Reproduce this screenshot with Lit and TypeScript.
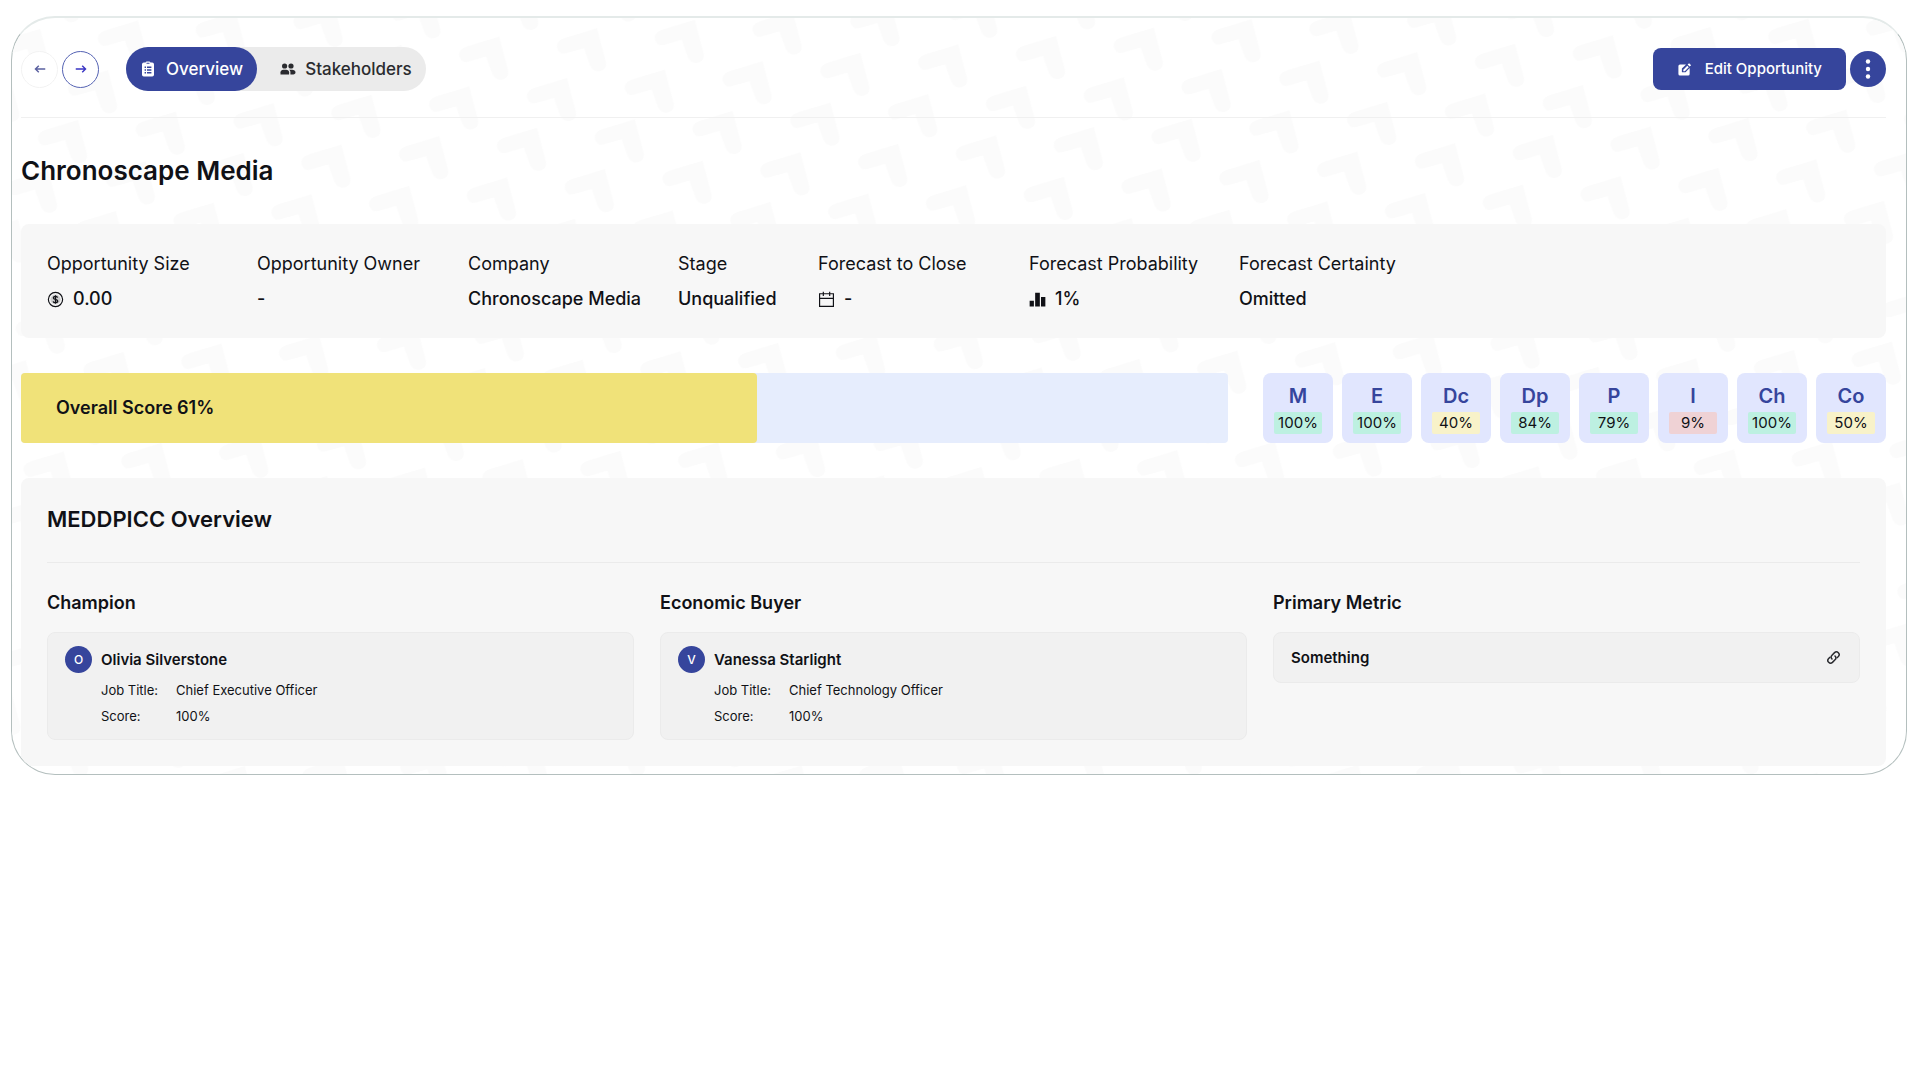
import { LitElement, html, css, svg } from "lit";
import { customElement, property } from "lit/decorators.js";

interface Fact {
  label: string;
  value: string;
  icon?: string;
}

interface Letter {
  code: string;
  score: number;
}

interface Person {
  role: string;
  name: string;
  title: string;
  score: number;
}

const FACTS: Fact[] = [
  { label: "Opportunity Size", value: "0.00", icon: "coin" },
  { label: "Opportunity Owner", value: "-" },
  { label: "Company", value: "Chronoscape Media" },
  { label: "Stage", value: "Unqualified" },
  { label: "Forecast to Close", value: "-", icon: "calendar" },
  { label: "Forecast Probability", value: "1%", icon: "bars" },
  { label: "Forecast Certainty", value: "Omitted" },
];

const LETTERS: Letter[] = [
  { code: "M", score: 100 },
  { code: "E", score: 100 },
  { code: "Dc", score: 40 },
  { code: "Dp", score: 84 },
  { code: "P", score: 79 },
  { code: "I", score: 9 },
  { code: "Ch", score: 100 },
  { code: "Co", score: 50 },
];

const PEOPLE: Person[] = [
  { role: "Champion", name: "Olivia Silverstone", title: "Chief Executive Officer", score: 100 },
  { role: "Economic Buyer", name: "Vanessa Starlight", title: "Chief Technology Officer", score: 100 },
];

const ICONS: Record<string, unknown> = {
  left: svg`<path d="M14 8H3M6.6 4.2 2.8 8l3.8 3.8" fill="none" stroke="currentColor" stroke-width="1.6"/>`,
  right: svg`<path d="M2 8h11M9.4 4.2 13.2 8l-3.8 3.8" fill="none" stroke="currentColor" stroke-width="1.6"/>`,
  clipboard: svg`<path fill="currentColor" fill-rule="evenodd" d="M5.600 1.600A1.400 1.400 0 0 1 6.900.4h2.200a1.400 1.400 0 0 1 1.300 1.200h1.800A1.800 1.800 0 0 1 14 3.400v10.400a1.800 1.800 0 0 1-1.800 1.800H3.800A1.800 1.800 0 0 1 2 13.800V3.400a1.800 1.800 0 0 1 1.800-1.800zM6.500 1.700v1.100h3V1.700zM4.600 5.500v1.400h1.400V5.500zm2.400 0v1.400h4.400V5.500zM4.600 8.300v1.400h1.400V8.300zm2.400 0v1.400h4.400V8.300zM4.600 11.100v1.400h1.400v-1.400zm2.400 0v1.400h4.400v-1.400z"/>`,
  people: svg`<g fill="currentColor"><circle cx="4.600" cy="5" r="2.600"/><circle cx="11" cy="5" r="2.600"/><path d="M.5 13.500v-2.200C.5 9.700 1.800 8.800 3.400 8.800h2.800c1.600 0 2.900.9 2.900 2.500v2.200z"/><path d="M9.200 8.800h2.900c1.900 0 3.400.9 3.400 2.500 0 1.300-.8 2.200-2.200 2.200h-2.900v-2.400c0-1-.5-1.700-1.200-2.300z"/></g>`,
  edit: svg`<path fill="currentColor" d="M9.600 2.600 8 4.200 5.200 7v3.900h3.900l2.800-2.800 1.600-1.600v6.300a1.700 1.700 0 0 1-1.700 1.700H3.200a1.700 1.700 0 0 1-1.700-1.700V4.300a1.700 1.700 0 0 1 1.700-1.700z"/><path fill="currentColor" d="M11 4.100 12.500 5.600 8.300 9.800H6.700V8.200zM12.900 1.200l2.200 2.200-1.600 1.500-2.200-2.200z"/>`,
  dots: svg`<g fill="currentColor"><circle cx="10" cy="2.500" r="2.200"/><circle cx="10" cy="10" r="2.200"/><circle cx="10" cy="17.500" r="2.200"/></g>`,
  coin: svg`<circle cx="8" cy="8" r="6.700" fill="none" stroke="currentColor" stroke-width="1.100"/><circle cx="8" cy="8" r="4.800" fill="currentColor" opacity=".18"/><path d="M10 6.200C9.800 5.400 9 5 8 5c-1.200 0-2 .6-2 1.500C6 8.500 10.100 7.400 10.100 9.500 10.100 10.400 9.200 11 8 11s-2-.5-2.200-1.300M8 3.900v8.200" fill="none" stroke="currentColor" stroke-width="1.200"/>`,
  calendar: svg`<path d="M1.500 2.600h13v11.900h-13zM1.500 6.900h13M5 .6v4M11 .6v4" fill="none" stroke="currentColor" stroke-width="1.100"/>`,
  bars: svg`<path fill="currentColor" d="M.6 9.200h4v5.400h-4zM5.800 1.600h4.400v13H5.800zM11.300 5.600h4.100v9h-4.100z"/>`,
  link: svg`<g fill="none" stroke="currentColor" stroke-width="1.600" stroke-linecap="round"><path d="M6.400 9.600a2.900 2.900 0 0 1 0-4.100l2.700-2.700a2.900 2.900 0 0 1 4.100 4.100L12 8.100"/><path d="M9.600 6.400a2.900 2.900 0 0 1 0 4.100l-2.700 2.700a2.900 2.900 0 0 1-4.100-4.100L4 7.900"/></g>`,
};

const icon = (name: string, size = 16) => html`<svg
  class="icon"
  width=${size}
  height=${size}
  viewBox=${name === "dots" ? "0 0 20 20" : "0 0 16 16"}
  aria-hidden="true"
>${ICONS[name]}</svg>`;

const tone = (score: number) => (score >= 60 ? "good" : score >= 30 ? "fair" : "poor");

/** Slanted lattice of faint corner marks behind the page. */
const STEP = { ax: 97.8, ay: -8.4, bx: -30, by: 49.75 };
const TILE = { w: 100, h: 50 };

@customElement("corner-backdrop")
export class CornerBackdrop extends LitElement {
  static styles = css`
    :host {
      display: block;
    }
    .fill {
      display: block;
      width: 100%;
      height: 100%;
    }
    .mark {
      fill: #fbfbfb;
    }
  `;

  render() {
    const a = STEP.ax / TILE.w;
    const b = STEP.ay / TILE.w;
    const c = STEP.bx / TILE.h;
    const d = STEP.by / TILE.h;
    const det = a * d - b * c;
    const inverse = [d / det, -b / det, -c / det, a / det, 0, 0].join(" ");
    const marks = [];
    for (let i = -1; i <= 2; i++) {
      for (let j = -2; j <= 2; j++) {
        marks.push(svg`<path class="mark"
          transform="translate(${i * TILE.w} ${j * TILE.h}) matrix(${inverse})"
          d="M0 0 9 34Q10 41 3 43-4 44-7 37L-13 20-31 25Q-38 27-40 19-41 13-33 10Z"/>`);
      }
    }
    return html`<svg class="fill" aria-hidden="true">
      <defs>
        <pattern
          id="corners"
          patternUnits="userSpaceOnUse"
          width=${TILE.w}
          height=${TILE.h}
          patternTransform="matrix(${a} ${b} ${c} ${d} 66 102)"
        >${marks}</pattern>
      </defs>
      <rect width="100%" height="100%" fill="url(#corners)"></rect>
    </svg>`;
  }
}

@customElement("person-card")
export class PersonCard extends LitElement {
  @property({ attribute: false }) person!: Person;

  static styles = css`
    :host {
      display: block;
    }
    .card {
      border: 1px solid #ebebeb;
      border-radius: 8px;
      background: #f1f1f1;
      padding: 13px 17px 10px;
    }
    .head {
      display: flex;
      align-items: center;
      gap: 9px;
      margin-bottom: 4px;
    }
    .avatar {
      display: grid;
      place-items: center;
      width: 27px;
      height: 27px;
      border-radius: 50%;
      background: #36459c;
      color: #fff;
      font-size: 12px;
      font-weight: 500;
    }
    .name {
      font-size: 15px;
      font-weight: 600;
    }
    .rows {
      display: grid;
      grid-template-columns: 75px 1fr;
      margin: 0 0 0 36px;
      font-size: 13px;
      line-height: 26px;
    }
    .rows dd {
      margin: 0;
    }
  `;

  render() {
    const p = this.person;
    return html`<div class="card">
      <div class="head">
        <span class="avatar">${p.name[0]}</span>
        <span class="name">${p.name}</span>
      </div>
      <dl class="rows">
        <dt>Job Title:</dt>
        <dd>${p.title}</dd>
        <dt>Score:</dt>
        <dd>${p.score}%</dd>
      </dl>
    </div>`;
  }
}

@customElement("app-root")
export class AppRoot extends LitElement {
  @property({ type: Number }) overall = 61;

  static styles = css`
    :host {
      display: flow-root;
      background: #fff;
      color: #101116;
      font-family: Inter, "Liberation Sans", sans-serif;
      font-size: 18px;
      line-height: 26px;
    }
    * {
      box-sizing: border-box;
    }
    h1,
    h2,
    h3,
    dl,
    dd {
      margin: 0;
    }
    button {
      font: inherit;
      color: inherit;
      border: 0;
      padding: 0;
      background: none;
      cursor: pointer;
    }
    .icon {
      display: block;
      flex: none;
    }
    .frame {
      position: relative;
      margin: 16px 13px 16px 11px;
      padding: 29px 20px 8px 9px;
      border: 1px solid #b4bfbe;
      border-top: 2px solid #e4eae9;
      border-radius: 44px;
      overflow: hidden;
    }
    .backdrop {
      position: absolute;
      inset: 0;
    }
    .page {
      position: relative;
      display: flex;
      flex-direction: column;
      gap: 35px;
    }
    .toolbar {
      display: flex;
      align-items: center;
      padding-bottom: 26px;
      border-bottom: 1px solid #f0f0f0;
    }
    .steps {
      display: flex;
      gap: 4px;
      margin-right: 27px;
    }
    .step {
      display: grid;
      place-items: center;
      width: 37px;
      height: 37px;
      border: 1px solid #f2f2f2;
      border-radius: 50%;
      background: #fff;
      color: #5a60a0;
    }
    .step.next {
      border-color: #5563b3;
      color: #3a35c4;
    }
    .tabs {
      display: flex;
      height: 44px;
      border-radius: 22px;
      background: #ebebeb;
    }
    .tab {
      display: flex;
      align-items: center;
      gap: 10px;
      padding: 0 14px;
      border-radius: 22px;
      font-size: 17px;
      font-weight: 500;
      color: #2a2b2f;
    }
    .tab.idle {
      gap: 9px;
      padding: 0 14px 0 23px;
    }
    .tab.active {
      background: #36459c;
      color: #fff;
    }
    .actions {
      display: flex;
      align-items: center;
      gap: 4px;
      margin-left: auto;
    }
    .edit {
      display: flex;
      align-items: center;
      gap: 13px;
      height: 42px;
      padding: 0 24px;
      border-radius: 8px;
      background: #36459c;
      color: #fff;
      font-size: 15px;
      font-weight: 500;
    }
    .more {
      display: grid;
      place-items: center;
      width: 36px;
      height: 36px;
      border-radius: 50%;
      background: #36459c;
      color: #fff;
    }
    .title {
      font-size: 26px;
      line-height: 36px;
      font-weight: 600;
    }
    .panel {
      border-radius: 8px;
      background: #f7f7f7;
    }
    .facts {
      display: grid;
      grid-template-columns: 210fr 211fr 210fr 140fr 211fr 210fr 621fr;
      padding: 27px 26px 26px;
    }
    .fact {
      display: flex;
      flex-direction: column;
      gap: 9px;
      white-space: nowrap;
    }
    .value {
      display: flex;
      align-items: center;
      gap: 9px;
      font-weight: 500;
    }
    .scores {
      display: flex;
      gap: 35px;
      height: 70px;
    }
    .meter {
      flex: 1;
      border-radius: 4px;
      background: #e6edfd;
    }
    .fill {
      display: flex;
      align-items: center;
      height: 100%;
      padding-left: 35px;
      border-radius: 4px;
      background: #f0e279;
      font-weight: 600;
      white-space: nowrap;
    }
    .letters {
      display: flex;
      gap: 9px;
    }
    .letter {
      display: flex;
      flex-direction: column;
      align-items: center;
      width: 70px;
      padding-top: 10px;
      border-radius: 8px;
      background: #e1e6fe;
    }
    .code {
      height: 29px;
      color: #36459c;
      font-size: 20px;
      font-weight: 600;
    }
    .badge {
      width: 48px;
      border-radius: 2px;
      font-size: 15px;
      line-height: 22px;
      text-align: center;
    }
    .good {
      background: #bdf0e1;
    }
    .fair {
      background: #f8f2c9;
    }
    .poor {
      background: #efd2d5;
    }
    .overview {
      padding: 25px 26px 26px;
    }
    .heading {
      padding-bottom: 27px;
      border-bottom: 1px solid #ebebeb;
      font-size: 22px;
      line-height: 32px;
      font-weight: 600;
    }
    .columns {
      display: grid;
      grid-template-columns: repeat(3, 1fr);
      gap: 26px;
      padding-top: 27px;
    }
    .subhead {
      margin-bottom: 16px;
      font-size: 18px;
      font-weight: 600;
    }
    .metric {
      display: flex;
      align-items: center;
      justify-content: space-between;
      height: 51px;
      padding: 0 18px 0 17px;
      border: 1px solid #ebebeb;
      border-radius: 8px;
      background: #f1f1f1;
      font-size: 15px;
      font-weight: 600;
    }
    .metric a {
      color: #2a2b2f;
    }
  `;

  render() {
    return html`<main class="frame">
      <corner-backdrop class="backdrop"></corner-backdrop>
      <div class="page">
        <header class="toolbar">
          <div class="steps">
            <button class="step" aria-label="Previous">${icon("left", 14)}</button>
            <button class="step next" aria-label="Next">${icon("right", 14)}</button>
          </div>
          <nav class="tabs">
            <button class="tab active">${icon("clipboard")}<span>Overview</span></button>
            <button class="tab idle">${icon("people")}<span>Stakeholders</span></button>
          </nav>
          <div class="actions">
            <button class="edit">${icon("edit", 15)}<span>Edit Opportunity</span></button>
            <button class="more" aria-label="More actions">${icon("dots", 20)}</button>
          </div>
        </header>
        <h1 class="title">Chronoscape Media</h1>
        <dl class="panel facts">
          ${FACTS.map(
            (f) => html`<div class="fact">
              <dt>${f.label}</dt>
              <dd class="value">${f.icon ? icon(f.icon, 17) : ""}<span>${f.value}</span></dd>
            </div>`,
          )}
        </dl>
        <section class="scores">
          <div class="meter">
            <div class="fill" style="width:${this.overall}%">Overall Score ${this.overall}%</div>
          </div>
          <div class="letters">
            ${LETTERS.map(
              (l) => html`<div class="letter">
                <span class="code">${l.code}</span>
                <span class="badge ${tone(l.score)}">${l.score}%</span>
              </div>`,
            )}
          </div>
        </section>
        <section class="panel overview">
          <h2 class="heading">MEDDPICC Overview</h2>
          <div class="columns">
            ${PEOPLE.map(
              (p) => html`<div>
                <h3 class="subhead">${p.role}</h3>
                <person-card .person=${p}></person-card>
              </div>`,
            )}
            <div>
              <h3 class="subhead">Primary Metric</h3>
              <div class="metric">
                <span>Something</span>
                <a href="#metric" aria-label="Open metric">${icon("link", 15)}</a>
              </div>
            </div>
          </div>
        </section>
      </div>
    </main>`;
  }
}
